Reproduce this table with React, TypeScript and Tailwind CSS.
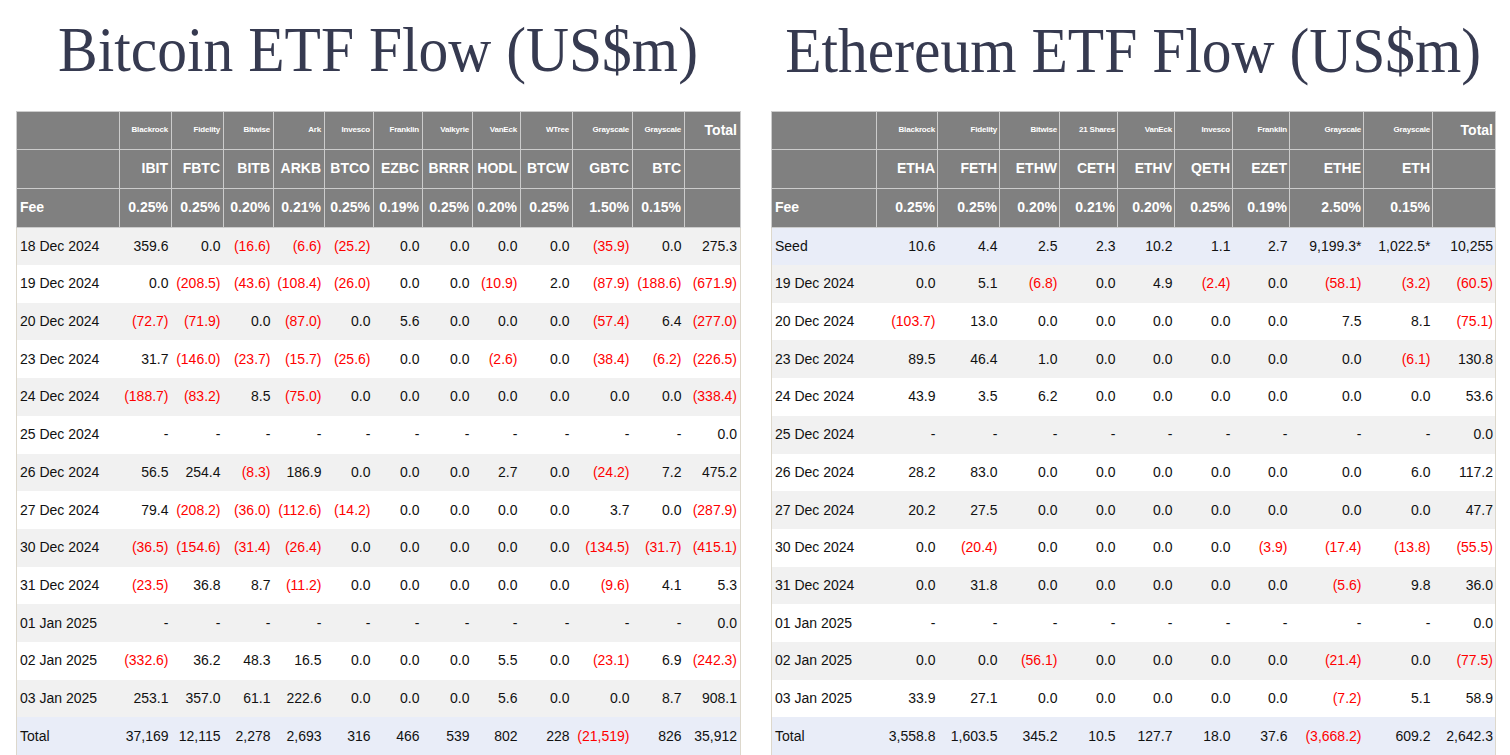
import React from "react";

type Fund = { co: string; ticker: string; fee: string; w: string };

const btcFunds: Fund[] = [
  { co: "Blackrock", ticker: "IBIT", fee: "0.25%", w: "w-[52px]" },
  { co: "Fidelity", ticker: "FBTC", fee: "0.25%", w: "w-[52px]" },
  { co: "Bitwise", ticker: "BITB", fee: "0.20%", w: "w-[50px]" },
  { co: "Ark", ticker: "ARKB", fee: "0.21%", w: "w-[51px]" },
  { co: "Invesco", ticker: "BTCO", fee: "0.25%", w: "w-[49px]" },
  { co: "Franklin", ticker: "EZBC", fee: "0.19%", w: "w-[49px]" },
  { co: "Valkyrie", ticker: "BRRR", fee: "0.25%", w: "w-[50px]" },
  { co: "VanEck", ticker: "HODL", fee: "0.20%", w: "w-[48px]" },
  { co: "WTree", ticker: "BTCW", fee: "0.25%", w: "w-[52px]" },
  { co: "Grayscale", ticker: "GBTC", fee: "1.50%", w: "w-[60px]" },
  { co: "Grayscale", ticker: "BTC", fee: "0.15%", w: "w-[52px]" },
];

const ethFunds: Fund[] = [
  { co: "Blackrock", ticker: "ETHA", fee: "0.25%", w: "w-[61px]" },
  { co: "Fidelity", ticker: "FETH", fee: "0.25%", w: "w-[62px]" },
  { co: "Bitwise", ticker: "ETHW", fee: "0.20%", w: "w-[60px]" },
  { co: "21 Shares", ticker: "CETH", fee: "0.21%", w: "w-[58px]" },
  { co: "VanEck", ticker: "ETHV", fee: "0.20%", w: "w-[57px]" },
  { co: "Invesco", ticker: "QETH", fee: "0.25%", w: "w-[58px]" },
  { co: "Franklin", ticker: "EZET", fee: "0.19%", w: "w-[57px]" },
  { co: "Grayscale", ticker: "ETHE", fee: "2.50%", w: "w-[74px]" },
  { co: "Grayscale", ticker: "ETH", fee: "0.15%", w: "w-[69px]" },
];

const dash11 = Array(11).fill("-");
const dash9 = Array(9).fill("-");

const btcRows: [string, string[]][] = [
  ["18 Dec 2024", ["359.6", "0.0", "(16.6)", "(6.6)", "(25.2)", "0.0", "0.0", "0.0", "0.0", "(35.9)", "0.0", "275.3"]],
  ["19 Dec 2024", ["0.0", "(208.5)", "(43.6)", "(108.4)", "(26.0)", "0.0", "0.0", "(10.9)", "2.0", "(87.9)", "(188.6)", "(671.9)"]],
  ["20 Dec 2024", ["(72.7)", "(71.9)", "0.0", "(87.0)", "0.0", "5.6", "0.0", "0.0", "0.0", "(57.4)", "6.4", "(277.0)"]],
  ["23 Dec 2024", ["31.7", "(146.0)", "(23.7)", "(15.7)", "(25.6)", "0.0", "0.0", "(2.6)", "0.0", "(38.4)", "(6.2)", "(226.5)"]],
  ["24 Dec 2024", ["(188.7)", "(83.2)", "8.5", "(75.0)", "0.0", "0.0", "0.0", "0.0", "0.0", "0.0", "0.0", "(338.4)"]],
  ["25 Dec 2024", [...dash11, "0.0"]],
  ["26 Dec 2024", ["56.5", "254.4", "(8.3)", "186.9", "0.0", "0.0", "0.0", "2.7", "0.0", "(24.2)", "7.2", "475.2"]],
  ["27 Dec 2024", ["79.4", "(208.2)", "(36.0)", "(112.6)", "(14.2)", "0.0", "0.0", "0.0", "0.0", "3.7", "0.0", "(287.9)"]],
  ["30 Dec 2024", ["(36.5)", "(154.6)", "(31.4)", "(26.4)", "0.0", "0.0", "0.0", "0.0", "0.0", "(134.5)", "(31.7)", "(415.1)"]],
  ["31 Dec 2024", ["(23.5)", "36.8", "8.7", "(11.2)", "0.0", "0.0", "0.0", "0.0", "0.0", "(9.6)", "4.1", "5.3"]],
  ["01 Jan 2025", [...dash11, "0.0"]],
  ["02 Jan 2025", ["(332.6)", "36.2", "48.3", "16.5", "0.0", "0.0", "0.0", "5.5", "0.0", "(23.1)", "6.9", "(242.3)"]],
  ["03 Jan 2025", ["253.1", "357.0", "61.1", "222.6", "0.0", "0.0", "0.0", "5.6", "0.0", "0.0", "8.7", "908.1"]],
];
const btcTotal = ["37,169", "12,115", "2,278", "2,693", "316", "466", "539", "802", "228", "(21,519)", "826", "35,912"];

const ethSeed = ["10.6", "4.4", "2.5", "2.3", "10.2", "1.1", "2.7", "9,199.3*", "1,022.5*", "10,255"];
const ethRows: [string, string[]][] = [
  ["19 Dec 2024", ["0.0", "5.1", "(6.8)", "0.0", "4.9", "(2.4)", "0.0", "(58.1)", "(3.2)", "(60.5)"]],
  ["20 Dec 2024", ["(103.7)", "13.0", "0.0", "0.0", "0.0", "0.0", "0.0", "7.5", "8.1", "(75.1)"]],
  ["23 Dec 2024", ["89.5", "46.4", "1.0", "0.0", "0.0", "0.0", "0.0", "0.0", "(6.1)", "130.8"]],
  ["24 Dec 2024", ["43.9", "3.5", "6.2", "0.0", "0.0", "0.0", "0.0", "0.0", "0.0", "53.6"]],
  ["25 Dec 2024", [...dash9, "0.0"]],
  ["26 Dec 2024", ["28.2", "83.0", "0.0", "0.0", "0.0", "0.0", "0.0", "0.0", "6.0", "117.2"]],
  ["27 Dec 2024", ["20.2", "27.5", "0.0", "0.0", "0.0", "0.0", "0.0", "0.0", "0.0", "47.7"]],
  ["30 Dec 2024", ["0.0", "(20.4)", "0.0", "0.0", "0.0", "0.0", "(3.9)", "(17.4)", "(13.8)", "(55.5)"]],
  ["31 Dec 2024", ["0.0", "31.8", "0.0", "0.0", "0.0", "0.0", "0.0", "(5.6)", "9.8", "36.0"]],
  ["01 Jan 2025", [...dash9, "0.0"]],
  ["02 Jan 2025", ["0.0", "0.0", "(56.1)", "0.0", "0.0", "0.0", "0.0", "(21.4)", "0.0", "(77.5)"]],
  ["03 Jan 2025", ["33.9", "27.1", "0.0", "0.0", "0.0", "0.0", "0.0", "(7.2)", "5.1", "58.9"]],
];
const ethTotal = ["3,558.8", "1,603.5", "345.2", "10.5", "127.7", "18.0", "37.6", "(3,668.2)", "609.2", "2,642.3"];

const headBase = "bg-[#808080] border border-[#cccccc] text-white font-bold align-middle";
const head = `${headBase} text-right`;

function Cell({ v, pr }: { v: string; pr: string }) {
  const neg = v.startsWith("(");
  return <td className={`${pr} text-right align-middle ${neg ? "text-[#ff0000]" : ""}`}>{v}</td>;
}

function FlowTable({
  funds, labelW, totalW, pr, rows, seed, total,
}: {
  funds: Fund[]; labelW: string; totalW: string; pr: string;
  rows: [string, string[]][]; seed?: string[]; total: string[];
}) {
  return (
    <table className="table-fixed border-collapse w-[724px] border-x border-[#ddd8cc] text-[14px] text-[#111111] font-['Liberation_Sans',Arial,sans-serif]">
      <colgroup>
        <col className={labelW} />
        {funds.map((f) => <col key={f.ticker} className={f.w} />)}
        <col className={totalW} />
      </colgroup>
      <thead>
        <tr className="h-[38px]">
          <th className={head}></th>
          {funds.map((f) => (
            <th key={f.ticker} className={`${head} ${pr} text-[8px] tracking-[-0.2px]`}>{f.co}</th>
          ))}
          <th className={`${head} ${pr} text-[14px]`}>Total</th>
        </tr>
        <tr className="h-[39px]">
          <th className={head}></th>
          {funds.map((f) => <th key={f.ticker} className={`${head} ${pr}`}>{f.ticker}</th>)}
          <th className={head}></th>
        </tr>
        <tr className="h-[39px]">
          <th className={`${headBase} text-left pl-[3px]`}>Fee</th>
          {funds.map((f) => <th key={f.ticker} className={`${head} ${pr}`}>{f.fee}</th>)}
          <th className={head}></th>
        </tr>
      </thead>
      <tbody>
        {seed && (
          <tr className="h-[38px] bg-[#e9edf8]">
            <td className="pl-[3px]">Seed</td>
            {seed.map((v, i) => <Cell key={i} v={v} pr={pr} />)}
          </tr>
        )}
        {rows.map(([d, vals], r) => (
          <tr key={d} className={`h-[37.7px] ${r % 2 === 0 ? "bg-[#f1f1f1]" : "bg-white"}`}>
            <td className="pl-[3px] whitespace-nowrap">{d}</td>
            {vals.map((v, i) => <Cell key={i} v={v} pr={pr} />)}
          </tr>
        ))}
        <tr className="h-[37.7px] bg-[#e9edf8]">
          <td className="pl-[3px]">Total</td>
          {total.map((v, i) => <Cell key={i} v={v} pr={pr} />)}
        </tr>
      </tbody>
    </table>
  );
}

export default function App() {
  const title = "flex justify-center text-[64px] leading-[64px] text-[#363a50] font-['Liberation_Serif','Times_New_Roman',serif] whitespace-nowrap";
  return (
    <div className="w-[1510px] h-[755px] overflow-hidden bg-white flex gap-[31px] pl-[16px]">
      {/* Bitcoin */}
      <div className="flex flex-col w-[724px]">
        <div className={`${title} h-[111px] pt-[18px]`}>
          <span className="inline-block scale-x-[0.93]">Bitcoin ETF Flow (US$m)</span>
        </div>
        <FlowTable
          funds={btcFunds} labelW="w-[103px]" totalW="w-[56px]" pr="pr-[3px]"
          rows={btcRows} total={btcTotal}
        />
      </div>

      {/* Ethereum */}
      <div className="flex flex-col w-[724px]">
        <div className={`${title} h-[112px] pt-[19px]`}>
          <span className="inline-block scale-x-[0.93]">Ethereum ETF Flow (US$m)</span>
        </div>
        <FlowTable
          funds={ethFunds} labelW="w-[105px]" totalW="w-[63px]" pr="pr-[2px]"
          rows={ethRows} seed={ethSeed} total={ethTotal}
        />
      </div>
    </div>
  );
}
